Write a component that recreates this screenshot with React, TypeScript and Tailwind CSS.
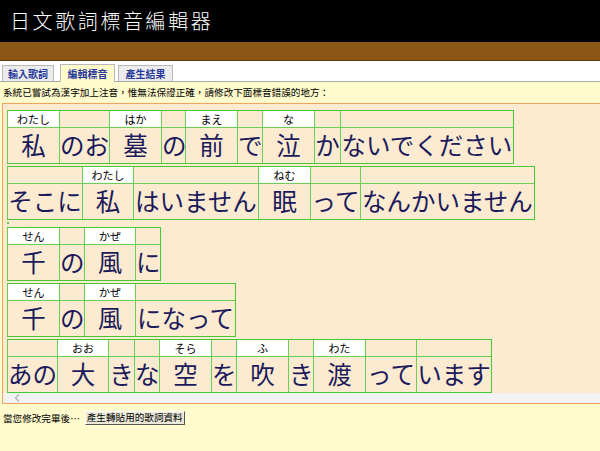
import React from "react";

type Seg = { t: string; f?: string; w: number };

const lines: Seg[][] = [
  [
    { t: "私", f: "わたし", w: 52 },
    { t: "のお", w: 50 },
    { t: "墓", f: "はか", w: 52 },
    { t: "の", w: 24 },
    { t: "前", f: "まえ", w: 52 },
    { t: "で", w: 25 },
    { t: "泣", f: "な", w: 52 },
    { t: "か", w: 26 },
    { t: "ないでください", w: 173 },
  ],
  [
    { t: "そこに", w: 75 },
    { t: "私", f: "わたし", w: 51 },
    { t: "はいません", w: 125 },
    { t: "眠", f: "ねむ", w: 52 },
    { t: "って", w: 50 },
    { t: "なんかいません", w: 174 },
  ],
  [
    { t: "千", f: "せん", w: 52 },
    { t: "の", w: 25 },
    { t: "風", f: "かぜ", w: 51 },
    { t: "に", w: 25 },
  ],
  [
    { t: "千", f: "せん", w: 52 },
    { t: "の", w: 25 },
    { t: "風", f: "かぜ", w: 51 },
    { t: "になって", w: 100 },
  ],
  [
    { t: "あの", w: 50 },
    { t: "大", f: "おお", w: 51 },
    { t: "き", w: 26 },
    { t: "な", w: 25 },
    { t: "空", f: "そら", w: 52 },
    { t: "を", w: 25 },
    { t: "吹", f: "ふ", w: 52 },
    { t: "き", w: 25 },
    { t: "渡", f: "わた", w: 52 },
    { t: "って", w: 51 },
    { t: "います", w: 75 },
  ],
];

function Cell({ seg }: { seg: Seg }) {
  return (
    // width comes from the segment data
    <div className="flex flex-col shrink-0 border-l border-[#6ccf55]" style={{ width: seg.w }}>
      <div className={`h-[16px] text-[11px] leading-[16px] text-center text-black ${seg.f ? "bg-white" : ""}`}>
        {seg.f}
      </div>
      <div className="h-[36px] border-t border-[#6ccf55] text-[24.5px] leading-[34px] text-center whitespace-nowrap text-[#1a1a5c]">
        {seg.t}
      </div>
    </div>
  );
}

function Line({ segs }: { segs: Seg[] }) {
  return (
    <div className="flex w-max border-t border-b border-r border-[#44c833]">
      {segs.map((s, i) => <Cell key={i} seg={s} />)}
    </div>
  );
}

export default function App() {
  return (
    <div className="w-[600px] h-[451px] overflow-hidden bg-[#fffbcc] text-black font-['Noto_Sans_CJK_TC',sans-serif]">
      {/* Header */}
      <div className="h-[42px] bg-black flex items-center pl-[10px] text-white text-[20px] font-light tracking-[2.6px] leading-none">
        日文歌詞標音編輯器
      </div>
      <div className="h-[19px] bg-[#8a5716] border-b border-[#5e3a0e]" />

      {/* Tabs */}
      <div className="h-[21px] bg-white border-b border-[#aaaaaa] flex items-end pl-[2px] text-[10px] font-bold text-[#2a3a9c]">
        <div className="w-[52px] h-[16px] flex items-center justify-center bg-[#ececec] border border-b-0 border-[#b8b8b8]">輸入歌詞</div>
        <div className="ml-[6px] -mb-px w-[55px] h-[18px] flex items-center justify-center bg-[#fffbcc] border border-b-0 border-[#b8b8b8]">編輯標音</div>
        <div className="ml-[3px] w-[55px] h-[16px] flex items-center justify-center bg-[#ececec] border border-b-0 border-[#b8b8b8]">產生結果</div>
      </div>

      {/* Message */}
      <div className="h-[21px] pl-[3px] pt-[3px] text-[9.6px] leading-[14px]">
        系統已嘗試為漢字加上注音，惟無法保證正確，請修改下面標音錯誤的地方：
      </div>

      {/* Lyrics box */}
      <div className="ml-[2px] h-[301px] flex flex-col border-l border-t border-b border-[#f4a460] bg-[#fcebd0]">
        <div className="flex-1 overflow-hidden pt-[6px] pl-[4px] flex flex-col font-['Noto_Sans_CJK_JP',sans-serif]">
          <Line segs={lines[0]} />
          <div className="mt-[2px]"><Line segs={lines[1]} /></div>
          <div className="mt-[2px] w-[2px] h-[12px] bg-[#5ccc44]" />
          <div className="mt-[3px]"><Line segs={lines[2]} /></div>
          <div className="mt-[2px]"><Line segs={lines[3]} /></div>
          <div className="mt-[2px]"><Line segs={lines[4]} /></div>
        </div>
        <div className="h-[10px] bg-[#f3f3f3] flex items-center pl-[11px]">
          <svg width="6" height="8" viewBox="0 0 6 8">
            <path d="M5 0.5 L1.5 4 L5 7.5" fill="none" stroke="#b4b4b4" strokeWidth="1.3" />
          </svg>
        </div>
      </div>

      {/* Bottom action */}
      <div className="pl-[3px] pt-[7px] flex items-center text-[9.6px]">
        <span>當您修改完畢後…</span>
        <button className="ml-[5px] w-[100px] h-[14px] flex items-center justify-center bg-[#ece9d8] border border-t-white border-l-white border-r-[#555] border-b-[#555] text-[9.6px] leading-none text-black">
          產生轉貼用的歌詞資料
        </button>
      </div>
    </div>
  );
}
